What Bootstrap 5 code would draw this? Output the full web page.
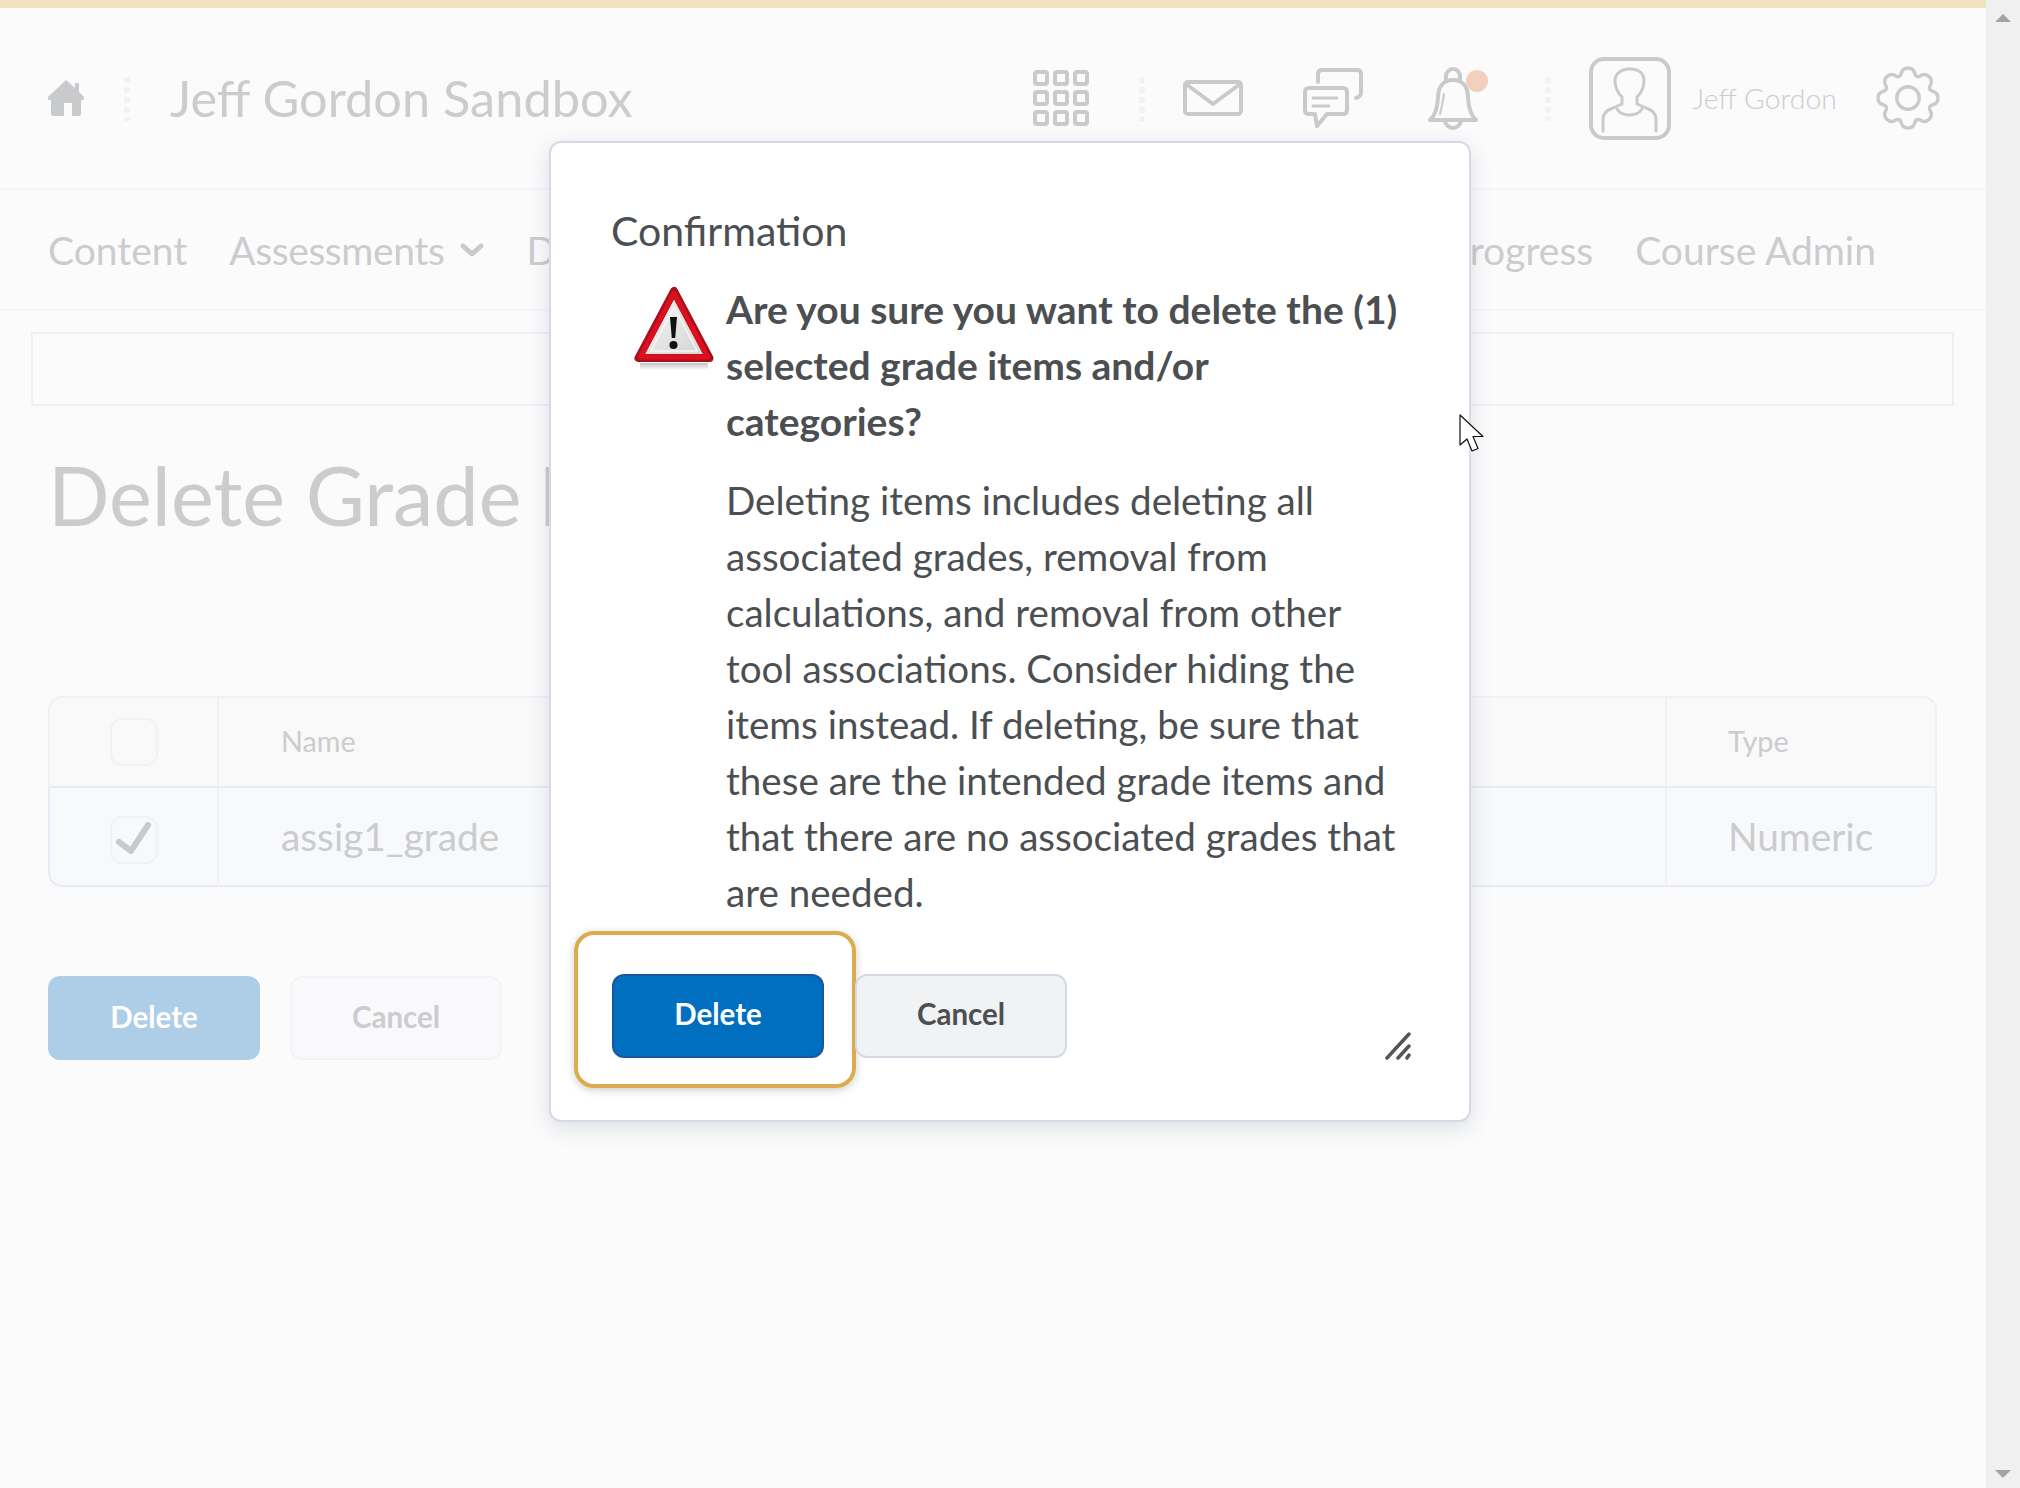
<!DOCTYPE html>
<html lang="en">
<head>
  <meta charset="UTF-8" />
  <meta name="viewport" content="width=device-width, initial-scale=1.0" />
  <title>Delete Grade Items</title>
  <link href="https://cdn.jsdelivr.net/npm/bootstrap@5.3.3/dist/css/bootstrap.min.css" rel="stylesheet">
  <style>
    html, body { height: 1488px; overflow: hidden; }
    body { font-family: Lato, "Liberation Sans", sans-serif; background: #fbfbfc; color: #cbccce; position: relative; }

    /* scrollbar column */
    .gb-scroll { width: 34px; background: #f0f0f0; padding: 14px 9px 10px; }
    .gb-tri-up, .gb-tri-down { width: 0; height: 0; border-left: 8px solid transparent; border-right: 8px solid transparent; }
    .gb-tri-up { border-bottom: 8px solid #a3a3a3; }
    .gb-tri-down { border-top: 8px solid #a3a3a3; }

    /* header */
    .gb-strip { height: 8px; background: #f0e2c3; }
    .gb-top { height: 182px; padding: 0 48px; border-bottom: 2px solid #f5f6f9; }
    .gb-sep { width: 6px; height: 46px; background-image: radial-gradient(circle, #f1f2f5 3px, transparent 3.4px); background-size: 6px 10px; }
    .gb-ico { fill: none; stroke: #c9cacc; stroke-width: 4; stroke-linecap: round; stroke-linejoin: round; overflow: visible; flex: none; }
    .gb-ico-gear { stroke-width: .9; }
    .gb-ico-bold { stroke-width: 5; }
    .gb-ico-check { stroke-width: 6; display: block; }
    .gb-title { font-size: 50.5px; line-height: 56px; margin-left: 40px; }
    .gb-user { font-size: 28.4px; font-weight: 300; margin: 0 41px 0 22px; }
    .gb-ml-home { margin-left: 40px; }
    .gb-ml-38 { margin-left: 38px; }
    .gb-ml-50 { margin-left: 50px; }
    .gb-ml-60 { margin-left: 60px; }
    .gb-ml-64 { margin-left: 64px; }
    .gb-ml-66 { margin-left: 66px; }

    /* nav */
    .gb-nav { height: 121px; padding: 1px 110px 0 48px; gap: 42px; font-size: 39px; border-bottom: 2px solid #f5f6f9; }
    .gb-nav-drop { letter-spacing: -.4px; }
    .gb-box { height: 74px; margin: 21px 32px 0 31px; border: 2px solid #eeeff1; }

    .gb-h { font-size: 81px; line-height: 100px; font-weight: 400; margin: 39px 0 151px 48px; }
    .gb-h-tail { margin-left: -4px; }

    /* table */
    .gb-tbl-wrap { margin: 0 49px 0 48px; }
    .gb-tbl { width: 100%; table-layout: fixed; border-collapse: separate; border-spacing: 0; }
    .gb-tbl th, .gb-tbl td { vertical-align: middle; padding: 0 0 0 61px; border-right: 2px solid #f0f1f4; }
    .gb-tbl th:last-child, .gb-tbl td:last-child { border-right: 2px solid #f0f1f4; }
    .gb-tbl th { height: 92px; font-size: 28.8px; font-weight: 400; background: #f9f9fa; border-top: 2px solid #f0f1f4; border-bottom: 2px solid #e5ecf5; }
    .gb-tbl td { height: 99px; font-size: 38.8px; background: #f8f9fb; border-bottom: 2px solid #e5ecf5; }
    .gb-tbl td:last-child { border-right-color: #e5ecf5; }
    .gb-tbl th:first-child { border-left: 2px solid #f0f1f4; border-top-left-radius: 14px; width: 171px; padding: 0; }
    .gb-tbl th:last-child { border-top-right-radius: 14px; width: 270px; }
    .gb-tbl td:first-child { border-left: 2px solid #e5ecf5; border-bottom-left-radius: 14px; padding: 0; }
    .gb-tbl td:last-child { border-bottom-right-radius: 14px; }
    .gb-tbl .gb-namecol { padding-left: 62px; }
    .gb-check { display: block; width: 48px; height: 48px; margin: 0 auto 0 60px; border: 2px solid #f1f2f4; border-radius: 12px; }
    .gb-check-on { margin-top: 6px; }

    /* buttons */
    .gb-btns { margin: 89px 0 0 48px; gap: 30px; }
    .gb-btn { width: 212px; height: 84px; border-radius: 12px; font-size: 29.5px; font-weight: 700; line-height: 1; padding-bottom: 8px; }
    .gb-btn-blue-dim { background: #aecde7; color: #fff; border: 2px solid #aecde7; }
    .gb-btn-grey-dim { background: #f9f9fb; color: #cbccce; border: 2px solid #f2f3f5; }

    /* dialog */
    .gb-dialog { position: absolute; left: 549px; top: 141px; width: 922px; padding: 60px 0 32px; background: #fff; color: #4c4f52; border: 2px solid #d5dae6; border-radius: 12px; box-shadow: 0 6px 22px rgba(70,80,100,.16); }
    .gb-dlg-title { font-size: 41px; line-height: 56px; font-weight: 400; margin: 0 0 22px 60px; }
    .gb-dlg-body { margin-left: 83px; gap: 12px; padding-right: 63px; }
    .gb-warn { width: 80px; height: 84px; margin-top: 5px; flex: none; }
    .gb-lead-text { font-size: 39px; line-height: 56px; font-weight: 700; margin-bottom: 23px; }
    .gb-para { font-size: 38.6px; line-height: 56px; margin: 0; }
    .gb-dlg-foot { margin: 11px 58px 0 23px; }
    .gb-focus { width: 282px; height: 157px; padding: 12px 0 0 6px; border: 4px solid #dcab4e; border-radius: 20px; box-shadow: 0 2px 8px rgba(0,0,0,.2); }
    .gb-dlg-btn { width: 212px; height: 84px; flex: none; border-radius: 12px; font-size: 29.5px; font-weight: 700; line-height: 1; padding-bottom: 10px; }
    .gb-dlg-primary { background: #006fbf; color: #fff; border: 2px solid #1a56a0; }
    .gb-dlg-secondary { background: #f1f2f4; color: #4c4f52; border: 2px solid #d4dae3; margin: 12px 0 0 -1px; }
    .gb-resize { width: 26px; height: 28px; margin-bottom: 28px; flex: none; }

    .gb-cursor { position: absolute; left: 1459px; top: 414px; width: 27px; height: 39px; }
  </style>
</head>
<body>

  <div class="d-flex">
    <!-- Page behind the dialog -->
    <div class="flex-grow-1">
      <div class="gb-strip"></div>

      <header class="gb-top d-flex align-items-center">
        <svg width="36" height="36" viewBox="0 0 36 36" class="flex-none"><path fill="#c9cacc" d="M18 0 27 8V3h4v9l5 5v3h-3v14a2 2 0 0 1-2 2h-7V23h-8v13H5a2 2 0 0 1-2-2V20H0v-3z"/></svg>
        <div class="gb-sep gb-ml-home"></div>
        <div class="gb-title">Jeff Gordon Sandbox</div>

        <svg class="gb-ico ms-auto" width="56" height="56" viewBox="0 0 56 56">
          <rect x="2" y="2" width="12" height="12" rx="2"/><rect x="22" y="2" width="12" height="12" rx="2"/><rect x="42" y="2" width="12" height="12" rx="2"/>
          <rect x="2" y="22" width="12" height="12" rx="2"/><rect x="22" y="22" width="12" height="12" rx="2"/><rect x="42" y="22" width="12" height="12" rx="2"/>
          <rect x="2" y="42" width="12" height="12" rx="2"/><rect x="22" y="42" width="12" height="12" rx="2"/><rect x="42" y="42" width="12" height="12" rx="2"/>
        </svg>
        <div class="gb-sep gb-ml-50"></div>
        <svg class="gb-ico gb-ml-38" width="60" height="36" viewBox="0 0 60 36">
          <rect x="2" y="2" width="56" height="32" rx="3"/><path d="M3 4 30 24 57 4"/>
        </svg>
        <svg class="gb-ico gb-ml-60" width="60" height="60" viewBox="0 0 60 60">
          <path d="M15 14V6q0-4 4-4h35q4 0 4 4v18q0 5-5 6"/>
          <path d="M6 20h34q4 0 4 4v18q0 4-4 4H24L14 58l-2-12H6q-4 0-4-4V24q0-4 4-4z"/>
          <path d="M10 30h24M10 38h16" stroke-width="3"/>
        </svg>
        <svg class="gb-ico gb-ml-64" width="52" height="60" viewBox="0 0 52 60">
          <path d="M3 52q7-6 8-22C11 18 17 12 26 12s15 6 15 18q1 16 8 22z"/>
          <path d="M19 13V8a7 7 0 0 1 14 0v5"/>
          <path d="M18 52a8 8 0 0 0 16 0"/>
          <path d="M17 26q-2 12-4 20" stroke-width="2"/>
          <circle cx="50" cy="13" r="11" fill="#f3d0bd" stroke="none"/>
        </svg>
        <div class="gb-sep gb-ml-66"></div>
        <svg class="gb-ico gb-ml-38" width="82" height="83" viewBox="0 0 82 83">
          <rect x="2" y="2" width="78" height="79" rx="13"/>
          <path d="M14 74V62c0-6 4-9 10-11l9-4v-7c-5-4-7-12-7-16 0-8 7-12 15-12s14 4 14 12c0 4-2 12-7 16v7l9 4c6 2 10 5 10 11v12" stroke-width="3"/>
          <path d="M28 52c5 8 20 8 25 0" stroke-width="3"/>
        </svg>
        <div class="gb-user">Jeff Gordon</div>
        <svg class="gb-ico gb-ico-gear" width="60" height="60" viewBox="0 0 16 16">
          <circle cx="8" cy="8" r="3"/>
          <path d="M9.796 1.343c-.527-1.79-3.065-1.79-3.592 0l-.094.319a.873.873 0 0 1-1.255.52l-.292-.16c-1.64-.892-3.433.902-2.54 2.541l.159.292a.873.873 0 0 1-.52 1.255l-.319.094c-1.79.527-1.79 3.065 0 3.592l.319.094a.873.873 0 0 1 .52 1.255l-.16.292c-.892 1.64.901 3.434 2.541 2.54l.292-.159a.873.873 0 0 1 1.255.52l.094.319c.527 1.79 3.065 1.79 3.592 0l.094-.319a.873.873 0 0 1 1.255-.52l.292.16c1.64.893 3.434-.902 2.54-2.541l-.159-.292a.873.873 0 0 1 .52-1.255l.319-.094c1.79-.527 1.79-3.065 0-3.592l-.319-.094a.873.873 0 0 1-.52-1.255l.16-.292c.893-1.64-.902-3.433-2.541-2.54l-.292.159a.873.873 0 0 1-1.255-.52z"/>
        </svg>
      </header>

      <nav class="gb-nav d-flex align-items-center">
        <span>Content</span>
        <span class="gb-nav-drop d-flex align-items-center gap-3">Assessments
          <svg class="gb-ico gb-ico-bold" width="24" height="14" viewBox="0 0 24 14"><path d="M3 3l9 8 9-8"/></svg>
        </span>
        <span>Discussions</span>
        <span class="ms-auto">Class Progress</span>
        <span>Course Admin</span>
      </nav>

      <div class="gb-box"></div>

      <h1 class="gb-h">Delete Grade <span class="gb-h-tail">Items</span></h1>

      <div class="gb-tbl-wrap">
        <table class="gb-tbl">
          <thead>
            <tr>
              <th><span class="gb-check"></span></th>
              <th class="gb-namecol">Name</th>
              <th>Type</th>
            </tr>
          </thead>
          <tbody>
            <tr>
              <td>
                <span class="gb-check gb-check-on">
                  <svg class="gb-ico gb-ico-check" width="44" height="44" viewBox="0 0 44 44"><path d="M7 24l12 9L36 7"/></svg>
                </span>
              </td>
              <td class="gb-namecol">assig1_grade</td>
              <td>Numeric</td>
            </tr>
          </tbody>
        </table>
      </div>

      <div class="gb-btns d-flex">
        <button type="button" class="btn gb-btn gb-btn-blue-dim">Delete</button>
        <button type="button" class="btn gb-btn gb-btn-grey-dim">Cancel</button>
      </div>
    </div>

    <!-- Scrollbar -->
    <div class="gb-scroll d-flex flex-column justify-content-between vh-100">
      <div class="gb-tri-up"></div>
      <div class="gb-tri-down"></div>
    </div>
  </div>

  <!-- Confirmation dialog -->
  <div class="gb-dialog">
    <h2 class="gb-dlg-title">Confirmation</h2>
    <div class="gb-dlg-body d-flex">
      <svg class="gb-warn" viewBox="0 0 80 84">
        <defs>
          <linearGradient id="warnFill" x1="0" y1="0" x2="1" y2="1">
            <stop offset="0" stop-color="#f4f4f4"/>
            <stop offset="1" stop-color="#d6d6d6"/>
          </linearGradient>
          <linearGradient id="warnShade" x1="0" y1="0" x2="0" y2="1">
            <stop offset="0" stop-color="#999" stop-opacity=".6"/>
            <stop offset="1" stop-color="#999" stop-opacity="0"/>
          </linearGradient>
        </defs>
        <rect x="6" y="77" width="68" height="7" fill="url(#warnShade)"/>
        <path d="M40 5 4.500 72h71z" fill="url(#warnFill)" stroke="#a80f1c" stroke-width="8" stroke-linejoin="round"/>
        <path d="M40 7 6.500 71h67z" fill="none" stroke="#dc0f1e" stroke-width="5" stroke-linejoin="round"/>
        <path d="M40 21 17 65h46z" fill="url(#warnFill)" stroke="#f6f6f6" stroke-width="1.500" stroke-linejoin="round"/>
        <path d="M36 31h7l-1.800 21h-3.400z" fill="#111"/>
        <circle cx="39.500" cy="59" r="4" fill="#111"/>
      </svg>
      <div>
        <p class="gb-lead-text">Are you sure you want to delete the (1) selected grade items and/or categories?</p>
        <p class="gb-para">Deleting items includes deleting all associated grades, removal from calculations, and removal from other tool associations. Consider hiding the items instead. If deleting, be sure that these are the intended grade items and that there are no associated grades that are needed.</p>
      </div>
    </div>
    <div class="gb-dlg-foot d-flex align-items-center">
      <div class="gb-focus d-flex align-items-center justify-content-center">
        <button type="button" class="btn gb-dlg-btn gb-dlg-primary">Delete</button>
      </div>
      <button type="button" class="btn gb-dlg-btn gb-dlg-secondary">Cancel</button>
      <svg class="gb-resize ms-auto align-self-end" viewBox="0 0 26 28" fill="none" stroke="#555" stroke-width="3.500" stroke-linecap="round">
        <path d="M2 26 24 2M13 26l11-12M22 26l2-3"/>
      </svg>
    </div>
  </div>

  <!-- Mouse pointer -->
  <svg class="gb-cursor" viewBox="0 0 27 39"><path d="M1 1v30l7-6 5 12 6-2.500L14 22.500h10z" fill="#fff" stroke="#111" stroke-width="1.200" stroke-linejoin="round"/></svg>

  <script src="https://cdn.jsdelivr.net/npm/bootstrap@5.3.3/dist/js/bootstrap.bundle.min.js"></script>
</body>
</html>
